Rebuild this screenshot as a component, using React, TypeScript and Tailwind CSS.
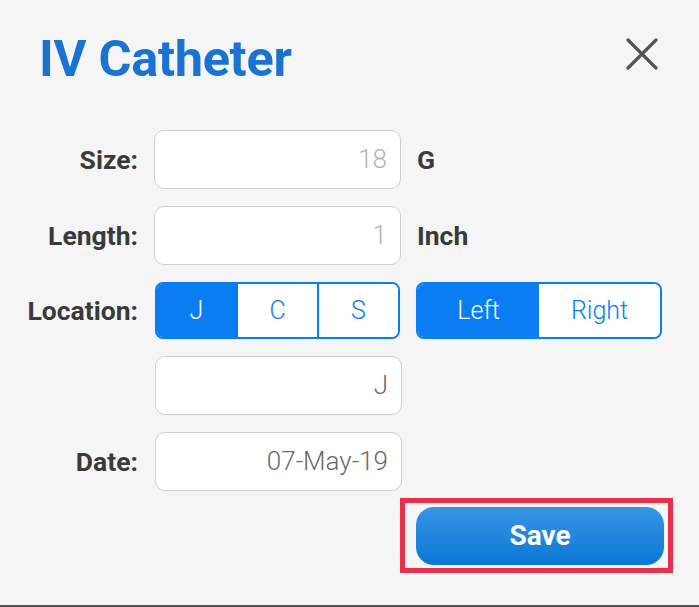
const font = { fontFamily: 'Roboto, "Liberation Sans", sans-serif' };

function Field({ value, muted }: { value: string; muted?: boolean }) {
  return (
    <div
      className={`flex h-[59px] w-[247px] items-center justify-end rounded-[10px] border border-[#cfcfcf] bg-white pr-[13px] text-[26px] font-light ${
        muted ? 'text-[#b4b4b4]' : 'text-[#6a6a6a]'
      }`}
    >
      {value}
    </div>
  );
}

function Label({ children }: { children?: string }) {
  return <div className="w-[138px] text-right text-[26.5px] font-bold text-[#3a3a3a]">{children}</div>;
}

export default function App() {
  const spots = ['J', 'C', 'S'];
  const sides = ['Left', 'Right'];

  return (
    <div className="relative h-[607px] w-[699px] overflow-hidden bg-[#f5f5f5]" style={font}>
      <div className="flex items-start justify-between pl-[39px] pr-[41px] pt-[30px]">
        <h1 className="text-[50.5px] font-bold leading-[58px] tracking-[-0.3px] text-[#1a73d0]">IV Catheter</h1>
        <svg className="mt-[8px] h-[32px] w-[32px]" viewBox="0 0 32 32" fill="none" stroke="#555" strokeWidth="3.2" strokeLinecap="round">
          <path d="M2 2 30 30M30 2 2 30" />
        </svg>
      </div>

      <div className="mt-[42px] flex flex-col gap-[17px]">
        <div className="flex items-center gap-[16px]">
          <Label>Size:</Label>
          <Field value="18" muted />
          <span className="text-[26.5px] font-bold text-[#3a3a3a]">G</span>
        </div>

        <div className="flex items-center gap-[16px]">
          <Label>Length:</Label>
          <Field value="1" muted />
          <span className="text-[26.5px] font-bold text-[#3a3a3a]">Inch</span>
        </div>

        <div className="flex items-center gap-[17px]">
          <Label>Location:</Label>
          <div className="flex h-[57px] w-[245px] overflow-hidden rounded-[8px] border-2 border-[#0a7df2]">
            {spots.map((s, i) => (
              <div
                key={s}
                className={`flex flex-1 items-center justify-center text-[25px] font-light ${
                  i === 0 ? 'bg-[#0a7df2] text-white' : 'bg-white text-[#0a7df2]'
                } ${i > 0 ? 'border-l-2 border-[#0a7df2]' : ''}`}
              >
                {s}
              </div>
            ))}
          </div>
          <div className="ml-[-1px] flex h-[57px] w-[246px] overflow-hidden rounded-[8px] border-2 border-[#0a7df2]">
            {sides.map((s, i) => (
              <div
                key={s}
                className={`flex flex-1 items-center justify-center text-[25px] font-light ${
                  i === 0 ? 'bg-[#0a7df2] text-white' : 'bg-white text-[#0a7df2]'
                }`}
              >
                {s}
              </div>
            ))}
          </div>
        </div>

        <div className="flex items-center gap-[17px]">
          <Label />
          <Field value="J" />
        </div>

        <div className="flex items-center gap-[17px]">
          <Label>Date:</Label>
          <Field value="07-May-19" />
        </div>
      </div>

      <div className="mt-[7px] flex justify-end pr-[26px]">
        <div className="border-[5px] border-[#e8304a] pb-[3px] pl-[11px] pr-[4px] pt-[4px]">
          <button className="block h-[58px] w-[248px] rounded-[18px] bg-gradient-to-b from-[#3496e4] to-[#0877d6] text-[28px] font-bold text-white">
            Save
          </button>
        </div>
      </div>

      <div className="absolute bottom-0 left-0 h-[2px] w-full bg-[#555]" />
    </div>
  );
}
